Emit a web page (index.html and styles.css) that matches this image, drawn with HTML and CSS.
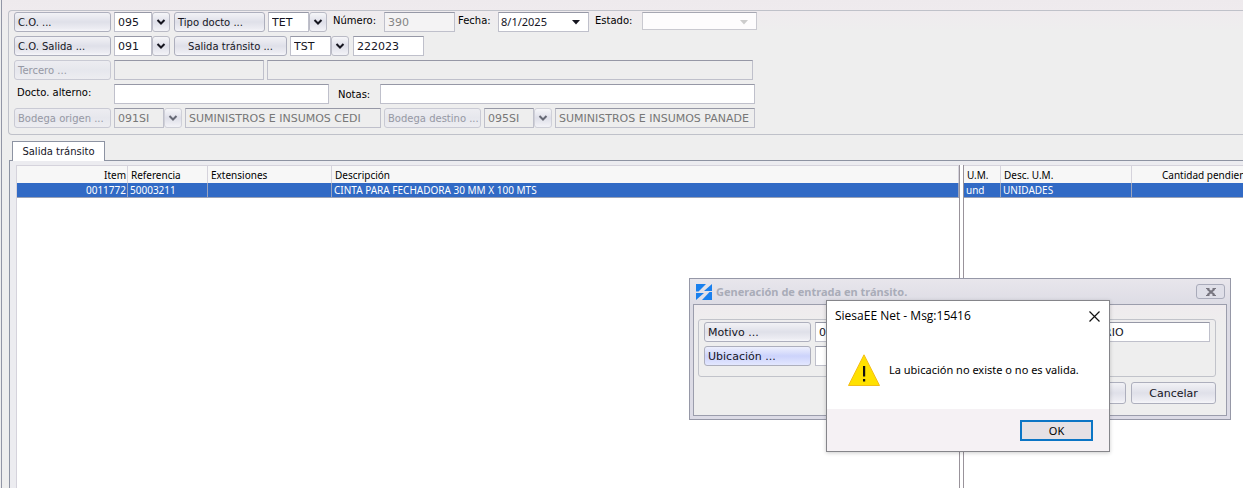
FILE: index.html
```html
<!DOCTYPE html>
<html lang="es">
<head>
<meta charset="utf-8">
<meta name="viewport" content="width=device-width, initial-scale=1">
<title>Salida tránsito</title>
<link rel="stylesheet" href="styles.css">
</head>
<body>
<svg class="sprite" aria-hidden="true">
  <symbol id="chevron" viewBox="0 0 10 8"><path d="M1.500 2 5 5.500 8.500 2" fill="none" stroke="currentColor" stroke-width="2"/></symbol>
  <symbol id="caret" viewBox="0 0 8 5"><path d="M0 0h8L4 4.500z" fill="currentColor"/></symbol>
</svg>
<main class="window">
  <form class="panel">
    <div class="row">
      <button type="button" class="btn w-label">C.O. ...</button>
      <div class="combo"><input class="field w-code" aria-label="C.O." value="095"><button type="button" class="arrow" aria-label="Abrir C.O."><svg><use href="#chevron"/></svg></button></div>
      <button type="button" class="btn w-type">Tipo docto ...</button>
      <div class="combo"><input class="field w-doc" aria-label="Tipo docto" value="TET"><button type="button" class="arrow" aria-label="Abrir tipo docto"><svg><use href="#chevron"/></svg></button></div>
      <label class="caption w-number" for="numero">Número:</label>
      <input class="field muted w-num" id="numero" value="390">
      <label class="caption w-date-label" for="fecha">Fecha:</label>
      <div class="picker w-date"><input class="field date" id="fecha" value="8/1/2025"><button type="button" class="drop" aria-label="Abrir calendario"><svg><use href="#caret"/></svg></button></div>
      <label class="caption w-state-label" for="estado">Estado:</label>
      <div class="picker pale w-state"><select class="field" id="estado" disabled><option></option></select><svg class="mark"><use href="#caret"/></svg></div>
    </div>
    <div class="row">
      <button type="button" class="btn w-label">C.O. Salida ...</button>
      <div class="combo"><input class="field w-code" aria-label="C.O. Salida" value="091"><button type="button" class="arrow" aria-label="Abrir C.O. Salida"><svg><use href="#chevron"/></svg></button></div>
      <button type="button" class="btn centered w-transit">Salida tránsito ...</button>
      <div class="combo"><input class="field w-doc" aria-label="Salida tránsito" value="TST"><button type="button" class="arrow" aria-label="Abrir salida tránsito"><svg><use href="#chevron"/></svg></button></div>
      <input class="field w-num" aria-label="Número de salida" value="222023">
    </div>
    <div class="row">
      <button type="button" class="btn w-label" disabled>Tercero ...</button>
      <input class="field w-third" aria-label="Tercero" disabled>
      <input class="field w-name" aria-label="Nombre del tercero" disabled>
    </div>
    <div class="row">
      <label class="caption w-label" for="docto">Docto. alterno:</label>
      <input class="field w-alt" id="docto">
      <label class="caption w-notes-label" for="notas">Notas:</label>
      <input class="field w-notes" id="notas">
    </div>
    <div class="row stores">
      <button type="button" class="btn w-label" disabled>Bodega origen ...</button>
      <div class="combo"><input class="field w-store" aria-label="Bodega origen" value="091SI" disabled><button type="button" class="arrow" aria-label="Abrir bodega origen" disabled><svg><use href="#chevron"/></svg></button></div>
      <input class="field w-origin" aria-label="Nombre bodega origen" value="SUMINISTROS E INSUMOS CEDI" disabled>
      <button type="button" class="btn w-label" disabled>Bodega destino ...</button>
      <div class="combo"><input class="field w-store" aria-label="Bodega destino" value="095SI" disabled><button type="button" class="arrow" aria-label="Abrir bodega destino" disabled><svg><use href="#chevron"/></svg></button></div>
      <input class="field w-target" aria-label="Nombre bodega destino" value="SUMINISTROS E INSUMOS PANADE" disabled>
    </div>
  </form>

  <section class="tabs">
    <button type="button" class="tab">Salida tránsito</button>
    <div class="tab-body">
      <div class="pane main-pane">
        <table class="grid">
          <colgroup><col class="c-item"><col class="c-ref"><col class="c-ext"><col></colgroup>
          <thead><tr><th class="end">Item</th><th>Referencia</th><th>Extensiones</th><th>Descripción</th></tr></thead>
          <tbody><tr><td class="end">0011772</td><td>50003211</td><td></td><td>CINTA PARA FECHADORA 30 MM X 100 MTS</td></tr></tbody>
        </table>
      </div>
      <div class="splitter"></div>
      <div class="pane side-pane">
        <table class="grid wide">
          <colgroup><col class="c-um"><col class="c-desc"><col></colgroup>
          <thead><tr><th>U.M.</th><th>Desc. U.M.</th><th class="quantity">Cantidad pendiente</th></tr></thead>
          <tbody><tr><td>und</td><td>UNIDADES</td><td></td></tr></tbody>
        </table>
      </div>
    </div>
  </section>
</main>

<section class="dialog" role="dialog" aria-labelledby="dialog-title">
  <header class="dialog-head">
    <svg class="logo" viewBox="0 0 16 16" aria-hidden="true"><path d="M0 0h10L2.500 7.500H0zM16 0v7H8zM0 9h8l-8 7zM16 8v8H6l7.500-8z" fill="#1a80ee"/></svg>
    <h2 id="dialog-title">Generación de entrada en tránsito.</h2>
    <button type="button" class="close" aria-label="Cerrar"><svg viewBox="0 0 10 8"><path d="M1.500 1 8.500 7M8.500 1 1.500 7" stroke="#77757f" stroke-width="2.200"/><path d="M0 .5h3.500M6.500 .5H10M0 7.500h3.500M6.500 7.500H10" stroke="#77757f"/></svg></button>
  </header>
  <div class="dialog-body">
    <div class="group">
      <div class="row">
        <button type="button" class="btn big w-dialog">Motivo ...</button>
        <input class="field big grow" aria-label="Motivo" value="0">
        <input class="field big w-reason" aria-label="Nombre del motivo" value="RIO">
      </div>
      <div class="row">
        <button type="button" class="btn big active w-dialog">Ubicación ...</button>
        <input class="field big w-third" aria-label="Ubicación">
      </div>
    </div>
    <div class="actions">
      <button type="button" class="btn big centered" aria-label="Aceptar"></button>
      <button type="button" class="btn big centered">Cancelar</button>
    </div>
  </div>
</section>

<section class="alert" role="alertdialog" aria-labelledby="alert-title">
  <header class="alert-head">
    <h2 id="alert-title">SiesaEE Net - Msg:15416</h2>
    <button type="button" class="alert-close" aria-label="Cerrar"><svg viewBox="0 0 11 11"><path d="M.5.5l10 10M10.500.5l-10 10" stroke="#111" stroke-width="1.200"/></svg></button>
  </header>
  <div class="alert-body">
    <svg class="warning" viewBox="0 0 32 32" aria-hidden="true"><path d="M16 .8 31.500 31.500H.5z" fill="#ffe100" stroke="#f3bd16"/><path d="M15 12h2.200v10.500H15zM15 25h2.200v2.500H15z" fill="#111"/></svg>
    <p>La ubicación no existe o no es valida.</p>
  </div>
  <footer class="alert-foot"><button type="button" class="ok">OK</button></footer>
</section>
</body>
</html>
```
FILE: styles.css
```css
* { box-sizing: border-box; }

body {
  margin: 0;
  min-height: 100vh;
  display: flex;
  background: #eee;
  color: #15151f;
  font: 10px/14px "DejaVu Sans", Verdana, sans-serif;
  overflow: hidden;
}

button, input, select { font: inherit; color: inherit; margin: 0; }
h2, p { margin: 0; }
.sprite { position: absolute; width: 0; height: 0; }

.window {
  flex: 1;
  min-width: 0;
  display: flex;
  flex-direction: column;
  margin-left: 1px;
  padding: 10px 0 0 6px;
  border-left: 1px solid #9296a6;
  background: linear-gradient(#eeeaed 0, #efebee 12px, #eee 30px);
}

.panel {
  display: flex;
  flex-direction: column;
  gap: 4px;
  padding: 1px 0 6px 5px;
  border: 1px solid #bfc1c9;
  border-right: 0;
  border-radius: 4px 0 0 4px;
}

.row { display: flex; gap: 3px; height: 20px; }
.row > * { flex-shrink: 0; }

.btn {
  height: 20px;
  padding: 1px 3px 0;
  border: 1px solid #adafbd;
  border-radius: 3px;
  background: linear-gradient(#f2f2f6, #dfe0e9 50%, #ececf2 85%, #f6f6fa);
  text-align: left;
  white-space: nowrap;
}
.btn.centered { text-align: center; }
.btn:disabled { color: #9698a4; border-color: #c9cad4; background: linear-gradient(#ededf1, #e6e7ed 50%, #ededf1); }
.btn.active { background: linear-gradient(#eef0fd, #ccd3fb 50%, #e3e7ff); }

.field {
  height: 20px;
  min-width: 0;
  padding: 0 3px;
  border: 1px solid #bfc0cb;
  border-top-color: #9698a6;
  border-radius: 0;
  background: #fff;
  font-size: 11px;
}
.field:disabled { color: #777; background: #eee; opacity: 1; }
.muted { color: #858585; background: #f4f3f4; }
.big { font-size: 11px; }

.combo { display: flex; margin-right: 1px; }
.stores .combo { margin-right: 0; }
.arrow {
  width: 18px;
  padding: 0;
  display: grid;
  place-items: center;
  border: 1px solid #b9bac5;
  border-radius: 3px;
  background: linear-gradient(#f6f6f9, #dedfe9 50%, #f3f3f7);
}
.arrow:disabled { color: #666975; border-color: #cfd0d8; }
.arrow svg { width: 10px; height: 8px; }

.picker { display: grid; grid-template-columns: 1fr 17px; }
.picker .field { grid-area: 1 / 1 / 2 / 3; width: 100%; }
.picker .date { font: 11px/14px "Noto Sans", Tahoma, sans-serif; padding: 0 2px 1px; }
.drop { grid-area: 1 / 2; padding: 0; border: 0; background: none; }
.drop svg, .mark { width: 8px; height: 5px; display: block; }
.pale .field:disabled { appearance: none; height: 18px; background: #fdfcfd; border-color: #c9c9d0; border-top-color: #a6a7b2; }
.mark { grid-area: 1 / 2; align-self: center; color: #ccc; }

.caption { font: 10px/18px "DejaVu Sans", Tahoma, sans-serif; padding-left: 3px; white-space: nowrap; color: #000; }

.w-label { width: 97px; }
.w-code { width: 38px; }
.w-type { width: 91px; }
.w-doc { width: 41px; }
.w-number { width: 50px; padding-left: 2px; }
.w-num { width: 71px; }
.w-date-label { width: 37px; padding-left: 0; }
.w-date { width: 91px; }
.w-state-label { width: 47px; }
.w-state { width: 115px; }
.w-transit { width: 113px; }
.w-third { width: 150px; }
.w-name { width: 486px; }
.w-alt { width: 215px; }
.w-notes-label { width: 45px; padding: 2px 0 0 6px; }
.w-notes { width: 375px; }
.w-store { width: 50px; }
.w-origin { width: 196px; }
.w-target { width: 200px; }

.tabs { flex: 1; display: flex; flex-direction: column; padding: 6px 0 0 1px; }
.tab {
  align-self: flex-start;
  width: 93px;
  height: 20px;
  margin: 0 0 -1px 3px;
  padding: 1px 0 0;
  border: 1px solid #8d93a2;
  border-bottom: 0;
  background: #fff;
  z-index: 1;
}
.tab-body {
  flex: 1;
  display: flex;
  padding: 4px 0 0 6px;
  border: solid #8d93a2;
  border-width: 1px 0 0 1px;
  background: #ececf0;
}
.pane { overflow: hidden; background: #fff; border-top: 1px solid #d5d3dc; }
.main-pane { flex: 1; min-width: 0; border-left: 1px solid #d5d3dc; }
.side-pane { width: 279px; }
.splitter { width: 5px; background: #fff; border: solid #99939b; border-width: 0 1px; }

.grid { width: 100%; table-layout: fixed; border-collapse: separate; border-spacing: 0; font: 10px/14px "Noto Sans", Tahoma, sans-serif; }
.grid.wide { width: 360px; }
.grid th, .grid td { padding: 0 2px; text-align: left; white-space: nowrap; overflow: hidden; }
.grid th { height: 17px; padding-left: 3px; font-weight: 400; background: #f7f7f7; border-right: 1px solid #d5d3dc; color: #000; }
.grid td { height: 15px; background: #316ac5; color: #fff; border-right: 1px solid #9ba4bd; border-bottom: 1px solid #99a1b5; }
.grid .end { text-align: right; padding-right: 1px; }
.grid .quantity { padding-left: 30px; }
.c-item { width: 111px; }
.c-ref { width: 80px; }
.c-ext { width: 124px; }
.c-um { width: 37px; }
.c-desc { width: 131px; }

.dialog {
  position: absolute;
  left: 689px;
  top: 278px;
  width: 542px;
  padding: 0 3px 3px;
  border: 1px solid #9698a7;
  background: linear-gradient(#e8e6ec, #dcdbe4 28px, #dcdbe6);
}
.dialog-head { display: flex; align-items: center; gap: 4px; height: 25px; padding: 0 2px 0 3px; }
.dialog-head h2 { flex: 1; color: #a9acb8; font: bold 11px/14px "Noto Sans", Tahoma, sans-serif; }
.logo { width: 16px; height: 16px; }
.close { width: 29px; height: 15px; padding: 0; display: grid; place-items: center; border: 1px solid #a9abba; border-radius: 3px; background: #dfdfe8; }
.close svg { width: 10px; height: 8px; }
.dialog-body { padding: 14px 10px 11px 4px; border: 1px solid #9b9dac; background: linear-gradient(#efebee, #eee 22px); }
.group { display: flex; flex-direction: column; gap: 4px; height: 58px; padding: 2px 5px; border: 1px solid #c1c3ca; border-radius: 3px; }
.group .row { gap: 4px; }
.group .grow { flex: 1; }
.w-dialog { width: 107px; }
.w-reason { width: 110px; }
.actions { display: flex; justify-content: flex-end; gap: 5px; padding-top: 5px; }
.actions .btn { width: 85px; height: 22px; }

.alert {
  position: absolute;
  left: 826px;
  top: 300px;
  width: 284px;
  border: 1px solid #85858a;
  background: #fff;
  color: #000;
  box-shadow: 0 1px 4px #0003;
  font: 11px/16px "Noto Sans", "Segoe UI", sans-serif;
}
.alert-head { display: flex; justify-content: space-between; height: 30px; padding: 0 8px; align-items: center; }
.alert-head h2 { font: 12px/16px "Open Sans", "Segoe UI", sans-serif; }
.alert-close { width: 13px; height: 13px; padding: 1px; border: 0; background: none; }
.alert-close svg { display: block; width: 11px; height: 11px; }
.alert-body { display: flex; align-items: center; gap: 9px; height: 78px; padding: 0 0 0 21px; white-space: nowrap; }
.warning { width: 32px; height: 32px; }
.alert-foot { display: flex; justify-content: flex-end; padding: 11px 16px 10px; background: #f5f1f4; }
.ok { width: 73px; height: 21px; padding: 0; border: 2px solid #0b75c5; background: #e5e1e5; }
```
